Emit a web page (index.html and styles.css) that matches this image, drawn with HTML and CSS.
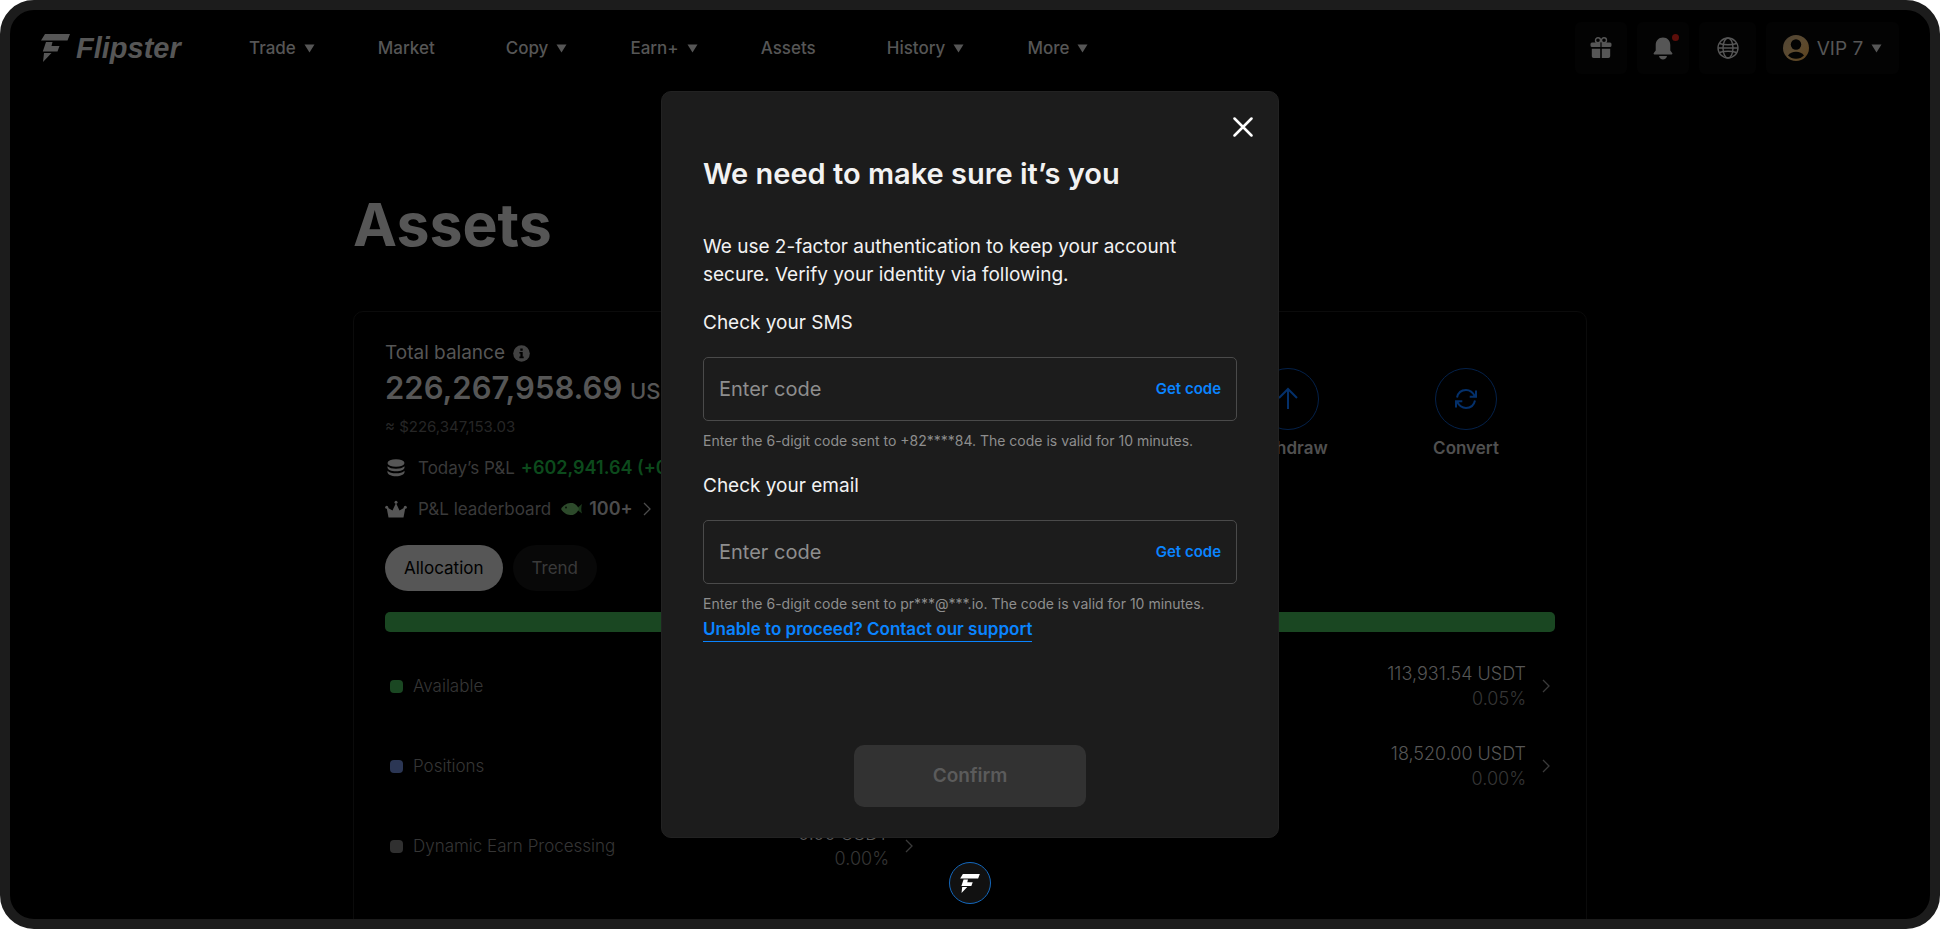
FILE: index.html
```html
<!DOCTYPE html>
<html lang="en">
  <head>
    <meta charset="UTF-8" />
    <meta name="viewport" content="width=device-width, initial-scale=1.0" />
    <title>Assets | Flipster</title>
    <link rel="stylesheet" href="styles.css">
  </head>
  <body>
    <!-- Shared shapes -->
    <svg class="sprite" aria-hidden="true">
      <symbol id="mark" viewBox="0 0 29 28">
        <path d="M4 0H29L26.500 6.500H0ZM5 8H11.500L10.500 12H18.500L16.500 17.500H1.800ZM3 19H10.500L2 28Z" />
      </symbol>
      <symbol id="caret" viewBox="0 0 11 9">
        <path d="M.5.500h10L5.500 8.500Z" />
      </symbol>
      <symbol id="chevron" viewBox="0 0 8 14">
        <path d="M1 1l6 6-6 6" fill="none" stroke="currentColor" stroke-width="1.300" />
      </symbol>
    </svg>

    <div class="frame">
      <header class="header">
        <a href="#" class="logo">
          <svg class="logo-mark"><use href="#mark" /></svg>
          <span class="logo-text">Flipster</span>
        </a>
        <nav class="nav">
          <a href="#" class="nav-item">Trade <svg class="caret"><use href="#caret" /></svg></a>
          <a href="#" class="nav-item nav-plain">Market</a>
          <a href="#" class="nav-item">Copy <svg class="caret"><use href="#caret" /></svg></a>
          <a href="#" class="nav-item">Earn+ <svg class="caret"><use href="#caret" /></svg></a>
          <a href="#" class="nav-item nav-plain">Assets</a>
          <a href="#" class="nav-item">History <svg class="caret"><use href="#caret" /></svg></a>
          <a href="#" class="nav-item">More <svg class="caret"><use href="#caret" /></svg></a>
        </nav>
        <div class="tools">
          <button class="tool" aria-label="Rewards">
            <svg width="22" height="22" viewBox="0 0 22 22" fill="currentColor">
              <path d="M2 5.500h8.400v4.600H2A1.500 1.500 0 0 1 .5 8.600V7A1.500 1.500 0 0 1 2 5.500ZM11.600 5.500H20A1.500 1.500 0 0 1 21.500 7v1.600a1.500 1.500 0 0 1-1.500 1.500h-8.400ZM1.800 11.800h8.400V21H3.600a1.800 1.800 0 0 1-1.800-1.800ZM11.800 11.800h8.400v7.400a1.800 1.800 0 0 1-1.800 1.800h-6.600Z" />
              <g fill="none" stroke="currentColor" stroke-width="1.400">
                <circle cx="8" cy="3.300" r="2.500" />
                <circle cx="14" cy="3.300" r="2.500" />
              </g>
            </svg>
          </button>
          <button class="tool tool-bell" aria-label="Notifications">
            <svg width="20" height="23" viewBox="0 0 20 23" fill="currentColor">
              <path d="M10 .5c4.500 0 7.300 3.200 7.300 7.500v5.500l1.900 2.600c.5.700.1 1.400-.6 1.400H1.400c-.7 0-1.100-.7-.6-1.400l1.900-2.600V8C2.700 3.700 5.500.5 10 .5ZM6 19h8c-.4 2-2 3.500-4 3.500S6.400 21 6 19Z" />
            </svg>
            <span class="dot"></span>
          </button>
          <button class="tool tool-wide" aria-label="Language">
            <svg width="22" height="22" viewBox="0 0 22 22" fill="none" stroke="currentColor" stroke-width="1.400">
              <circle cx="11" cy="11" r="10" />
              <ellipse cx="11" cy="11" rx="5" ry="10" />
              <path d="M2.200 6.500Q11 9 19.800 6.500M2.200 15.500Q11 13 19.800 15.500M1 11H21" />
            </svg>
          </button>
          <button class="tool tool-vip">
            <svg width="26" height="26" viewBox="0 0 26 26">
              <defs>
                <linearGradient id="gold" x1="0" y1="0" x2="1" y2="1">
                  <stop offset="0" stop-color="#4f4434" />
                  <stop offset=".5" stop-color="#5c4a30" />
                  <stop offset="1" stop-color="#5e431c" />
                </linearGradient>
              </defs>
              <circle cx="13" cy="13" r="13" fill="url(#gold)" />
              <circle cx="13" cy="9.500" r="5.200" fill="#030303" />
              <path d="M5 20.500c1.800-2.600 4.600-3.800 8-3.800s6.200 1.200 8 3.800c-2 2-4.800 3.300-8 3.300s-6-1.300-8-3.300Z" fill="#030303" />
            </svg>
            <span>VIP 7</span>
            <svg class="caret"><use href="#caret" /></svg>
          </button>
        </div>
      </header>

      <main class="main">
        <h1 class="page-title">Assets</h1>
        <section class="card">
          <div class="summary">
            <div class="balance">
              <div class="balance-label">
                Total balance
                <svg width="17" height="17" viewBox="0 0 17 17">
                  <circle cx="8.500" cy="8.500" r="8.300" fill="#424242" />
                  <path d="M7.300 3.500h2.400v2.200H7.300ZM6.400 7h3.300v4.600h1v1.600H6.400v-1.600h1V8.600h-1Z" fill="#000" />
                </svg>
              </div>
              <div class="balance-total">226,267,958.69 <span class="unit">USDT</span></div>
              <div class="balance-approx">≈ $226,347,153.03</div>
              <div class="stat">
                <svg width="22" height="20" viewBox="0 0 22 20" fill="#565656">
                  <ellipse cx="11" cy="5" rx="8.500" ry="3.800" />
                  <path d="M2.500 8.200c1.800 1.700 4.700 2.500 8.500 2.500s6.700-.8 8.500-2.500v1.300c0 2.200-3.800 3.800-8.500 3.800S2.500 11.700 2.500 9.500ZM2.500 12.700c1.800 1.800 4.700 2.600 8.500 2.600s6.700-.8 8.500-2.600v1.500c0 2.200-3.800 4-8.500 4s-8.500-1.800-8.500-4Z" />
                </svg>
                <span>Today’s P&amp;L</span>
                <span class="gain">+602,941.64 (+0.27%)</span>
              </div>
              <a href="#" class="stat">
                <svg width="22" height="18" viewBox="0 0 22 18" fill="#565656">
                  <path d="M3.500 17.500 1.500 7 7.500 10.500 11 3l3.500 7.500L20.500 7l-2 10.500Z" />
                  <circle cx="11" cy="2.300" r="1.500" />
                  <circle cx="1.700" cy="7.300" r="1.500" />
                  <circle cx="20.300" cy="7.300" r="1.500" />
                </svg>
                <span>P&amp;L leaderboard</span>
                <svg class="fish" width="22" height="14" viewBox="0 0 22 14">
                  <path d="M15 7 21 2q-1.500 5 0 9.500Z" fill="#1c3a1c" />
                  <path d="M0 7C3 2 7 1 10.500 1S16 3.500 18 7c-2 3.500-4 6-7.500 6S3 12 0 7Z" fill="#2d4a2b" />
                  <circle cx="5" cy="5.500" r="1" fill="#0a120a" />
                </svg>
                <span class="rank">100+</span>
                <svg class="chevron chevron-big"><use href="#chevron" /></svg>
              </a>
            </div>
            <div class="actions">
              <button class="action">
                <span class="action-icon">
                  <svg width="24" height="24" viewBox="0 0 24 24">
                    <path d="M12 22V2M3 11l9-9 9 9" />
                  </svg>
                </span>
                Withdraw
              </button>
              <button class="action">
                <span class="action-icon">
                  <svg width="24" height="24" viewBox="0 0 24 24">
                    <path d="M3 10.500C4 6 7.500 3 12 3c4 0 7 2.500 9 6.500M22 3.500V9.800H15.700M21 13.500C20 18 16.500 21 12 21c-4 0-7-2.500-9-6.500M2 20.500V14.200H8.300" />
                  </svg>
                </span>
                Convert
              </button>
            </div>
          </div>

          <div class="tabs">
            <button class="tab tab-active">Allocation</button>
            <button class="tab">Trend</button>
          </div>
          <div class="bar"></div>

          <div class="allocation">
            <ul class="list">
              <li class="row">
                <span class="swatch green"></span>
                <span>Available</span>
              </li>
              <li class="row">
                <span class="swatch blue"></span>
                <span>Positions</span>
              </li>
              <li class="row">
                <span class="swatch gray"></span>
                <span>Dynamic Earn Processing</span>
                <div class="amount"><b>0.00 USDT</b><span>0.00%</span></div>
                <svg class="chevron"><use href="#chevron" /></svg>
              </li>
            </ul>
            <ul class="list">
              <li class="row">
                <div class="amount"><b>113,931.54 USDT</b><span>0.05%</span></div>
                <svg class="chevron"><use href="#chevron" /></svg>
              </li>
              <li class="row">
                <div class="amount"><b>18,520.00 USDT</b><span>0.00%</span></div>
                <svg class="chevron"><use href="#chevron" /></svg>
              </li>
            </ul>
          </div>
        </section>
      </main>
      <a href="#" class="float-badge" aria-label="Flipster">
        <svg width="20" height="19"><use href="#mark" /></svg>
      </a>
    </div>

    <!-- Two-factor dialog -->
    <div class="overlay">
      <form class="modal" role="dialog" aria-labelledby="modal-title">
        <button type="button" class="close" aria-label="Close">
          <svg width="20" height="20" viewBox="0 0 20 20">
            <path d="M1.500 1.500l17 17M18.500 1.500l-17 17" stroke="#fff" stroke-width="2.500" stroke-linecap="round" />
          </svg>
        </button>
        <h2 class="modal-title" id="modal-title">We need to make sure it’s you</h2>
        <p class="modal-text">We use 2-factor authentication to keep your account secure. Verify your identity via following.</p>

        <label class="field-label" for="sms">Check your SMS</label>
        <div class="field">
          <input type="text" id="sms" placeholder="Enter code" />
          <button type="button" class="get-code">Get code</button>
        </div>
        <p class="hint">Enter the 6-digit code sent to +82****84. The code is valid for 10 minutes.</p>

        <label class="field-label" for="email">Check your email</label>
        <div class="field">
          <input type="text" id="email" placeholder="Enter code" />
          <button type="button" class="get-code">Get code</button>
        </div>
        <p class="hint">Enter the 6-digit code sent to pr***@***.io. The code is valid for 10 minutes.</p>
        <a href="#" class="support">Unable to proceed? Contact our support</a>

        <button type="submit" class="confirm" disabled>Confirm</button>
      </form>
    </div>
  </body>
</html>
```

FILE: styles.css
```css
* {
  box-sizing: border-box;
}
body {
  margin: 0;
  background: #fff;
  font-family: Inter, "Liberation Sans", sans-serif;
  font-size: 18px;
  color: #565656;
}
h1, h2, p, ul {
  margin: 0;
  padding: 0;
}
a {
  color: inherit;
  text-decoration: none;
}
button {
  font: inherit;
  color: inherit;
  background: none;
  border: 0;
  padding: 0;
}
svg {
  flex-shrink: 0;
}
.sprite {
  position: absolute;
  width: 0;
  height: 0;
}
.frame {
  position: relative;
  height: 100vh;
  overflow: hidden;
  background: #000;
  border: 10px solid #1c1c1c;
  border-radius: 34px;
}

/* Header */
.header {
  display: flex;
  align-items: center;
  padding: 12px 31px;
}
.logo {
  display: flex;
  align-items: center;
  gap: 6px;
  width: 208px;
}
.logo-mark {
  width: 29px;
  height: 28px;
  fill: #565656;
}
.logo-text {
  font-family: "Liberation Sans", Arial, sans-serif;
  font-size: 29px;
  line-height: 32px;
  font-weight: bold;
  font-style: italic;
}
.nav {
  display: flex;
  gap: 63px;
  font-size: 17px;
  font-weight: 500;
}
.nav-item {
  display: flex;
  align-items: center;
  gap: 8px;
}
.nav-plain {
  padding-right: 8px;
}
.caret {
  width: 11px;
  height: 9px;
  fill: currentColor;
}
.tools {
  display: flex;
  gap: 10px;
  margin-left: auto;
}
.tool {
  position: relative;
  display: flex;
  align-items: center;
  justify-content: center;
  width: 52px;
  height: 52px;
  background: #030303;
  border-radius: 6px;
}
.tool-wide {
  width: 57px;
}
.tool-vip {
  width: 133px;
  gap: 8px;
  font-size: 19px;
}
.dot {
  position: absolute;
  top: 12px;
  right: 10px;
  width: 7px;
  height: 7px;
  border-radius: 50%;
  background: #5c0e0a;
}

/* Assets page */
.main {
  max-width: 1234px;
  margin: 0 auto;
}
.page-title {
  padding: 100px 0 48px;
  font-size: 59px;
  line-height: 77px;
  font-weight: 700;
}
.card {
  min-height: 700px;
  padding: 28px 31px;
  border: 1px solid #0b0b0b;
  border-radius: 10px;
}
.summary {
  display: flex;
  justify-content: space-between;
}
.balance-label {
  display: flex;
  align-items: center;
  gap: 8px;
  font-size: 19px;
  line-height: 26px;
}
.balance-total {
  font-size: 31px;
  line-height: 44px;
  font-weight: 600;
}
.unit {
  font-size: 22px;
  font-weight: 500;
}
.balance-approx {
  margin-bottom: 6px;
  font-size: 15px;
  line-height: 28px;
  color: #262626;
}
.stat {
  display: flex;
  align-items: center;
  height: 41px;
  font-size: 17px;
  color: #3a3a3a;
}
.stat > svg:first-child {
  margin-right: 11px;
}
.gain {
  margin-left: 6px;
  font-size: 18px;
  font-weight: 600;
  color: #0c4a1c;
}
.fish {
  margin: 0 6px 0 10px;
}
.rank {
  font-size: 18px;
  font-weight: 600;
  color: #4c4c4c;
}
.chevron {
  width: 8px;
  height: 14px;
  color: #3a3a3a;
}
.chevron-big {
  height: 16px;
  margin-left: 10px;
  color: #4c4c4c;
}
.actions {
  display: flex;
  gap: 56px;
  padding: 28px 28px 0 0;
  align-items: flex-start;
}
.action {
  display: flex;
  flex-direction: column;
  align-items: center;
  gap: 6px;
  width: 122px;
  font-size: 17px;
  font-weight: 600;
  line-height: 24px;
  color: #505050;
}
.action-icon {
  display: flex;
  align-items: center;
  justify-content: center;
  width: 62px;
  height: 62px;
  border: 1px solid #04214a;
  border-radius: 50%;
}
.action-icon path {
  fill: none;
  stroke: #04306a;
  stroke-width: 2;
}
.tabs {
  display: flex;
  gap: 10px;
  margin: 16px 0 21px;
}
.tab {
  height: 46px;
  padding: 0 19px;
  border-radius: 23px;
  background: #080808;
  color: #3a3a3a;
  font-size: 17px;
}
.tab-active {
  background: #565656;
  color: #000;
}
.bar {
  height: 20px;
  border-radius: 5px;
  background: #1a4722;
}
.allocation {
  display: grid;
  grid-template-columns: 1fr 1fr;
  column-gap: 114px;
  padding: 14px 5px 0;
}
.list {
  list-style: none;
}
.row {
  display: flex;
  align-items: center;
  height: 80px;
  font-size: 17px;
  font-weight: 300;
  color: #363636;
}
.swatch {
  width: 13px;
  height: 13px;
  margin-right: 10px;
  border-radius: 4px;
}
.green {
  background: #1a4722;
}
.blue {
  background: #2b3654;
}
.gray {
  background: #303030;
}
.amount {
  display: flex;
  flex-direction: column;
  margin-left: auto;
  margin-right: 16px;
  text-align: right;
  font-size: 18px;
  line-height: 25px;
}
.amount b {
  font-weight: 300;
  color: #565656;
}
.float-badge {
  position: absolute;
  left: calc(50% - 21px);
  bottom: 15px;
  display: flex;
  align-items: center;
  justify-content: center;
  width: 42px;
  height: 42px;
  background: #111;
  border: 1px solid #1468bd;
  border-radius: 50%;
  fill: #fff;
}

/* Two-factor dialog */
.overlay {
  position: fixed;
  inset: 0;
  display: flex;
  justify-content: center;
  align-items: flex-start;
  padding-top: 91px;
}
.modal {
  position: relative;
  display: flex;
  flex-direction: column;
  width: 618px;
  padding: 64px 41px 30px;
  background: #1c1c1c;
  border: 1px solid #222;
  border-radius: 10px;
  color: #f2f2f2;
  font-size: 20px;
  line-height: 28px;
}
.close {
  position: absolute;
  top: 25px;
  right: 25px;
  display: flex;
}
.modal-title {
  font-size: 29px;
  line-height: 36px;
  font-weight: 600;
}
.modal-text {
  margin-top: 41px;
  font-size: 19px;
}
.field-label {
  margin-top: 20px;
  font-size: 19px;
}
.field {
  display: flex;
  align-items: center;
  height: 64px;
  margin-top: 20px;
  padding: 0 15px;
  border: 1px solid #4a4a4a;
  border-radius: 5px;
}
.field input {
  flex: 1;
  min-width: 0;
  padding: 0;
  background: none;
  border: 0;
  outline: none;
  color: #f2f2f2;
  font: inherit;
}
.field input::placeholder {
  color: #8e8e8e;
}
.get-code {
  font-size: 15px;
  font-weight: 600;
  color: #0a84ff;
}
.hint {
  margin-top: 9px;
  font-size: 14px;
  line-height: 22px;
  color: #8e8e8e;
}
.support {
  align-self: flex-start;
  margin-top: 2px;
  border-bottom: 1px solid #0a84ff;
  font-size: 17px;
  line-height: 24px;
  font-weight: 600;
  color: #0a84ff;
}
.confirm {
  align-self: center;
  width: 232px;
  height: 62px;
  margin-top: 103px;
  border-radius: 10px;
  background: #323232;
  color: #5b5b5b;
  font-size: 19px;
  font-weight: 600;
}
```
